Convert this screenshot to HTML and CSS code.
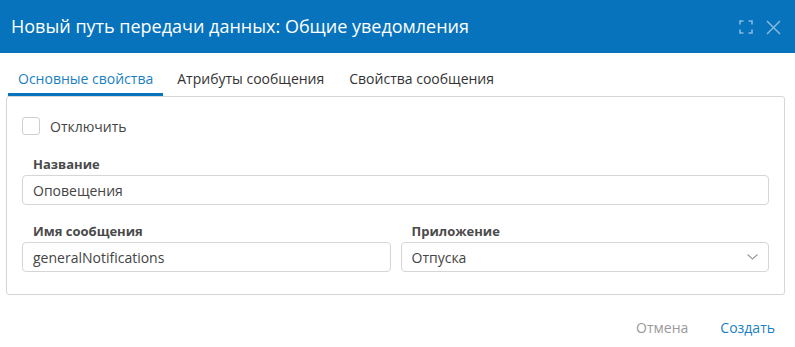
FILE: index.html
```html
<!DOCTYPE html>
<html lang="ru">
<head>
<meta charset="utf-8">
<link rel="stylesheet" href="styles.css">
</head>
<body>
<div class="dialog">
  <header class="head">
    <h1 class="title">Новый путь передачи данных: Общие уведомления</h1>
    <div class="head-tools">
      <svg class="ico" width="14" height="14" viewBox="0 0 14 14" fill="none" stroke="currentColor" stroke-width="1.6">
        <path d="M1 4.5V1H4.5M9.5 1H13V4.5M13 9.5V13H9.5M4.5 13H1V9.5"/>
      </svg>
      <svg class="ico" width="15" height="15" viewBox="0 0 15 15" fill="none" stroke="currentColor" stroke-width="1.5">
        <path d="M1 1L14 14M14 1L1 14"/>
      </svg>
    </div>
  </header>
  <nav class="tabs">
    <span class="tab active">Основные свойства</span>
    <span class="tab">Атрибуты сообщения</span>
    <span class="tab">Свойства сообщения</span>
  </nav>
  <section class="panel">
    <label class="check"><span class="box"></span><span>Отключить</span></label>
    <div class="field">
      <div class="label">Название</div>
      <div class="input">Оповещения</div>
    </div>
    <div class="row">
      <div class="field">
        <div class="label">Имя сообщения</div>
        <div class="input">generalNotifications</div>
      </div>
      <div class="field">
        <div class="label">Приложение</div>
        <div class="input select">Отпуска
          <svg width="11" height="6" viewBox="0 0 11 6" fill="none" stroke="#9a9a9a" stroke-width="1.1"><path d="M0.5 0.5L5.5 5L10.5 0.5"/></svg>
        </div>
      </div>
    </div>
  </section>
  <footer class="foot">
    <span class="btn cancel">Отмена</span>
    <span class="btn create">Создать</span>
  </footer>
</div>
</body>
</html>
```
FILE: styles.css
```css
* { box-sizing: border-box; }
html, body { margin: 0; padding: 0; background: #fff; }
body { font-family: "Open Sans", "Noto Sans", sans-serif; color: #333; }
.dialog { width: 795px; height: 347px; }
.head {
  height: 53px;
  background: #0773bd;
  display: flex;
  align-items: center;
  justify-content: space-between;
  padding: 0 14px 0 11px;
}
.title { margin: 0; font-size: 18px; font-weight: 400; color: #fff; line-height: 24px; padding-bottom: 1px; }
.head-tools { display: flex; align-items: center; gap: 13px; color: #86b9e0; padding-top: 1px; }
.ico { display: block; }
.tabs { display: flex; padding: 0 0 0 8px; height: 43px; align-items: flex-end; }
.tab { font-size: 14px; color: #333; padding: 0 10px 4px 10px; line-height: 20px; border-bottom: 3px solid transparent; margin-right: 4px; }
.tab.active { color: #1b7fc4; border-bottom-color: #0773bd; }
.tab:nth-child(2) { margin-right: 5px; }
.panel {
  margin: 0 10px 0 6px;
  border: 1px solid #d6d6d6;
  border-radius: 3px;
  height: 199px;
  padding: 20px 15px 0 15px;
}
.check { display: flex; align-items: center; gap: 10px; font-size: 14px; color: #444; height: 18px; }
.box { width: 18px; height: 18px; border: 1px solid #cfcfcf; border-radius: 3px; display: block; }
.field { margin-top: 20px; flex: 1; }
.label { font-size: 13px; font-weight: 700; color: #4a4a4a; line-height: 18px; margin-bottom: 2px; padding-left: 11px; }
.input {
  height: 30px;
  border: 1px solid #d6d6d6;
  border-radius: 4px;
  font-size: 14px;
  color: #444;
  padding: 0 10px;
  display: flex;
  align-items: center;
}
.select { justify-content: space-between; padding-right: 10px; }
.row { display: flex; gap: 10px; }
.row .field { margin-top: 17px; }
.foot { display: flex; justify-content: flex-end; align-items: center; gap: 32px; padding: 23px 20px 0 0; }
.btn { font-size: 14px; line-height: 20px; }
.cancel { color: #9a9a9a; }
.create { color: #1b7fc4; }
```
